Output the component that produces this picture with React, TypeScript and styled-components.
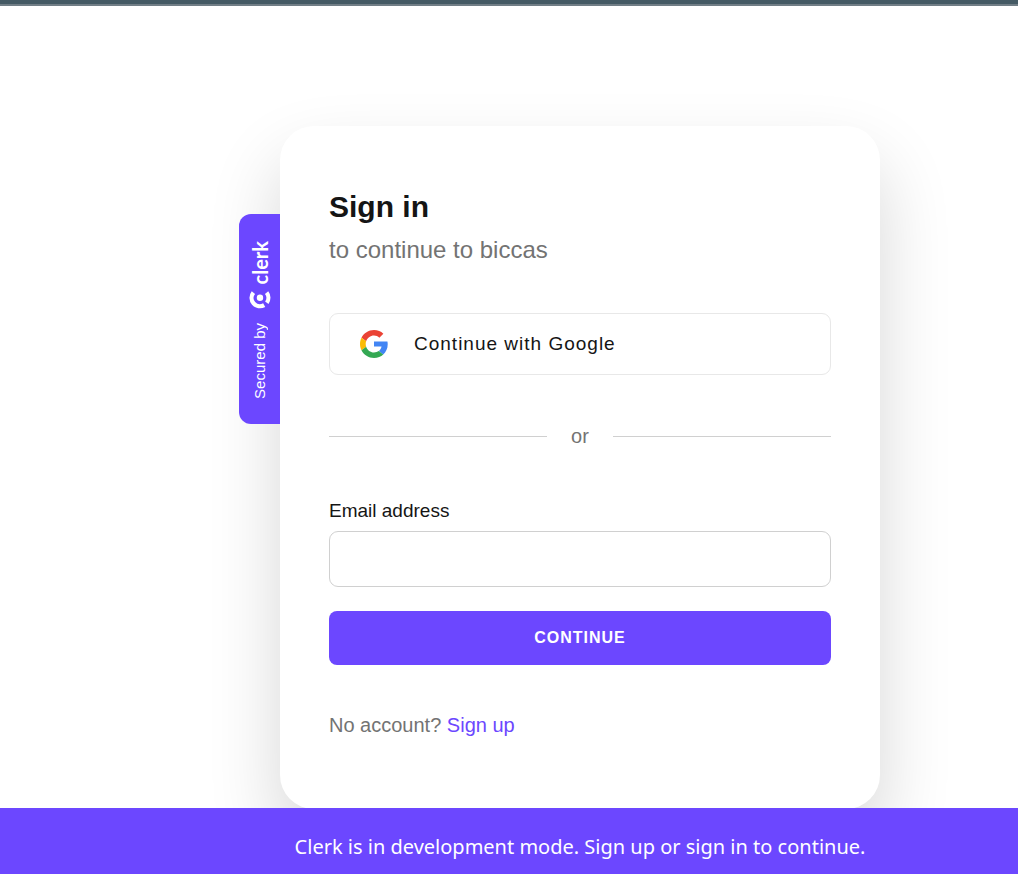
import React from 'react';
import styled, { createGlobalStyle } from 'styled-components';

const GlobalStyle = createGlobalStyle`
  *, *::before, *::after { box-sizing: border-box; }
  html, body, #root { height: 100%; }
  body {
    margin: 0;
    background: #ffffff;
    font-family: 'Liberation Sans', Arial, sans-serif;
    color: #151515;
  }
`;

const Page = styled.div`
  min-height: 100%;
  display: flex;
  flex-direction: column;
  overflow: hidden;
`;

const TopBar = styled.div`
  flex: none;
  height: 6px;
  background: #455a64;
  border-bottom: 2px solid #717e86;
`;

const Main = styled.main`
  flex: 1 0 0;
  min-height: 0;
  display: flex;
  justify-content: center;
  align-items: flex-start;
  padding: 120px 0 0 142px;
`;

const CardWrap = styled.div`
  position: relative;
  width: 100%;
  max-width: 600px;
`;

const Card = styled.section`
  display: flex;
  flex-direction: column;
  padding: 60px 49px;
  border-radius: 34px;
  background: #ffffff;
  box-shadow: 0 36px 72px rgba(0, 0, 0, 0.16);
`;

const Badge = styled.a`
  position: absolute;
  right: 100%;
  top: 88px;
  width: 41px;
  height: 210px;
  padding: 2px 0 0 1px;
  display: flex;
  flex-direction: column;
  align-items: center;
  justify-content: center;
  border-radius: 12px 0 0 12px;
  background: #6c47ff;
  color: #ffffff;
  text-decoration: none;
`;

const SideText = styled.span`
  writing-mode: vertical-rl;
  transform: rotate(180deg);
  font-size: 15px;
  line-height: 20px;
`;

const Wordmark = styled(SideText)`
  font-family: Lato, sans-serif;
  font-weight: 700;
  font-size: 20px;
`;

const Mark = styled.svg`
  display: block;
  margin: 6px 0 14px;
`;

const Title = styled.h1`
  margin: 0;
  font-size: 30px;
  line-height: 42px;
  font-weight: 700;
`;

const Subtitle = styled.p`
  margin: 5px 0 0;
  font-size: 24px;
  line-height: 34px;
  color: #737373;
`;

const SocialButton = styled.button`
  display: flex;
  align-items: center;
  gap: 26px;
  height: 62px;
  margin-top: 46px;
  padding: 0 30px;
  border: 1px solid #e8e8e8;
  border-radius: 9px;
  background: #ffffff;
  color: #151515;
  font-family: inherit;
  font-size: 19px;
  letter-spacing: 1px;
  line-height: 28px;
  cursor: pointer;
`;

const Divider = styled.div`
  display: flex;
  align-items: center;
  gap: 24px;
  margin: 47px 0;
  font-size: 20px;
  line-height: 28px;
  color: #737373;

  &::before, &::after {
    content: '';
    flex: 1;
    height: 1px;
    background: #d0d0d0;
  }
`;

const Form = styled.form`
  display: flex;
  flex-direction: column;
`;

const Label = styled.label`
  font-size: 19px;
  line-height: 28px;
`;

const Input = styled.input`
  height: 56px;
  margin: 6px 0 24px;
  padding: 0 24px;
  border: 1px solid #d0d0d0;
  border-radius: 9px;
  background: #ffffff;
  font: inherit;
`;

const Submit = styled.button`
  height: 54px;
  border: 0;
  border-radius: 8px;
  background: #6c47ff;
  color: #ffffff;
  font-family: inherit;
  font-size: 16px;
  font-weight: 700;
  letter-spacing: 1px;
  text-transform: uppercase;
  cursor: pointer;
`;

const Footer = styled.p`
  margin: 46px 0 10px;
  font-size: 20px;
  line-height: 28px;
  color: #737373;
`;

const Link = styled.a`
  color: #6c47ff;
  text-decoration: none;
`;

const Banner = styled.footer`
  position: relative;
  flex: none;
  padding: 24px 0 12px 142px;
  background: #6c47ff;
  color: #ffffff;
  text-align: center;
  font-family: 'Noto Sans', sans-serif;
  font-size: 20px;
  line-height: 30px;
`;

function GoogleIcon() {
  return (
    <svg width="28" height="28" viewBox="0 0 48 48" aria-hidden="true">
      <path fill="#EA4335" d="M24 9.5c3.54 0 6.71 1.22 9.21 3.6l6.85-6.85C35.9 2.38 30.47 0 24 0 14.62 0 6.51 5.38 2.56 13.22l7.98 6.19C12.43 13.72 17.74 9.5 24 9.5z" />
      <path fill="#4285F4" d="M47.5 24.55c0-1.57-.15-3.4-.5-4.95H24v8.6h12.94c-.58 2.96-2.26 6.1-4.78 7.8l7.73 6c4.51-4.18 7.61-9.8 7.61-17.45z" />
      <path fill="#FBBC05" d="M10.53 28.59c-.48-1.45-.76-2.99-.76-4.59s.27-3.14.76-4.59l-7.98-6.19C.92 16.46 0 20.12 0 24c0 3.88.92 7.54 2.56 10.78l7.97-6.19z" />
      <path fill="#34A853" d="M24 48c6.48 0 11.93-2.13 15.89-5.81l-7.73-6c-2.15 1.45-4.92 2.3-8.16 2.3-6.26 0-11.57-4.22-13.47-9.91l-7.98 6.19C6.51 42.62 14.62 48 24 48z" />
    </svg>
  );
}

function ClerkMark() {
  return (
    <Mark width="22" height="18" viewBox="0 0 22 18" aria-hidden="true">
      <circle cx="11" cy="6.8" r="3.2" fill="#fff" />
      <g fill="none" stroke="#fff" strokeWidth="4.2">
        <path d="M4.4 1.6 A8.4 8.4 0 0 0 15.2 14.1" />
        <path d="M17.6 1.6 A8.4 8.4 0 0 1 17.8 11.7" />
      </g>
    </Mark>
  );
}

export default function App() {
  return (
    <>
      <GlobalStyle />
      <Page>
        <TopBar />
        <Main>
          <CardWrap>
            <Badge href="#clerk">
              <Wordmark>clerk</Wordmark>
              <ClerkMark />
              <SideText>Secured by</SideText>
            </Badge>
            <Card>
              <Title>Sign in</Title>
              <Subtitle>to continue to biccas</Subtitle>
              <SocialButton type="button">
                <GoogleIcon />
                Continue with Google
              </SocialButton>
              <Divider>or</Divider>
              <Form onSubmit={(e) => e.preventDefault()}>
                <Label htmlFor="email">Email address</Label>
                <Input id="email" type="email" />
                <Submit type="submit">Continue</Submit>
              </Form>
              <Footer>
                No account? <Link href="#sign-up">Sign up</Link>
              </Footer>
            </Card>
          </CardWrap>
        </Main>
        <Banner>Clerk is in development mode. Sign up or sign in to continue.</Banner>
      </Page>
    </>
  );
}
